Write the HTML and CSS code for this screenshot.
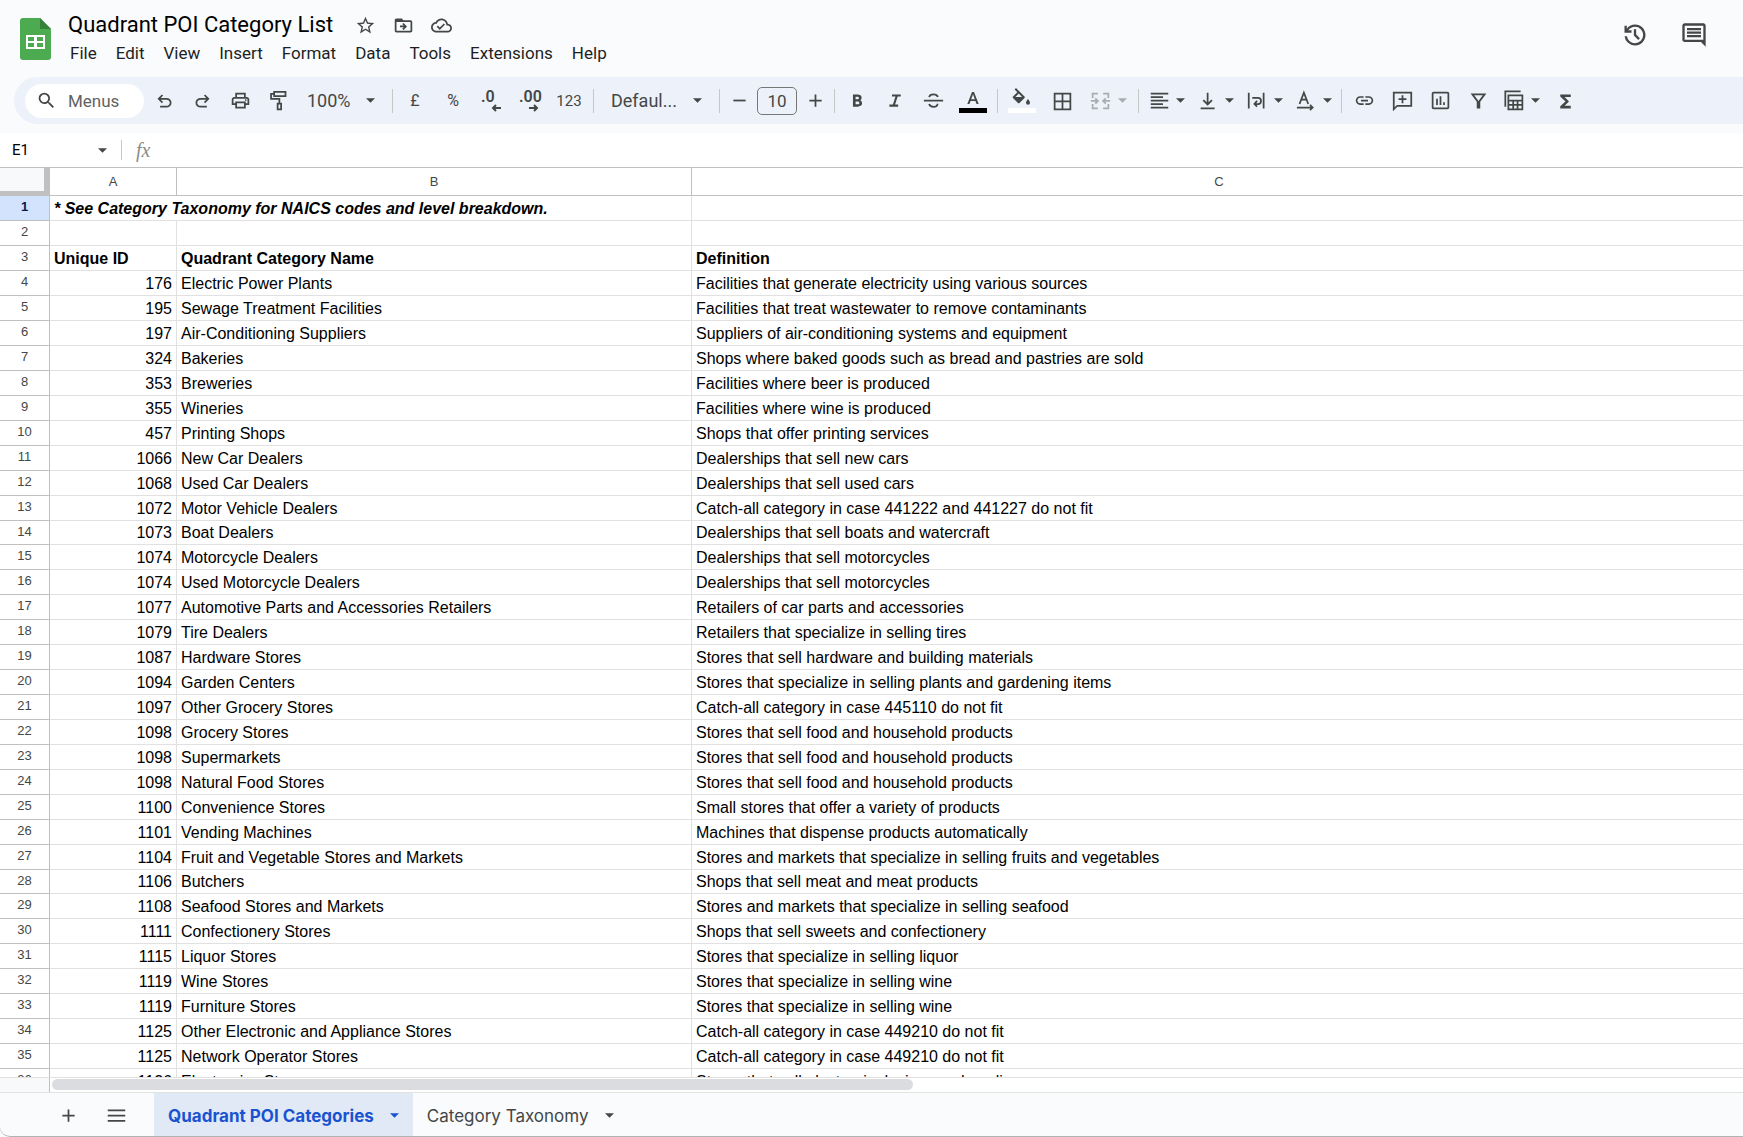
FILE: index.html
```html
<!DOCTYPE html>
<html lang="en">
<head>
    <meta charset="UTF-8">
    <meta name="viewport" content="width=device-width, initial-scale=1.0">
    <title>Quadrant POI Category List</title>
    <link rel="stylesheet" href="styles.css">
</head>
<body>
    <header class="top">
        <svg class="logo" viewBox="0 0 31 42">
            <path d="M3 0h17l11 11v28a3 3 0 0 1-3 3H3a3 3 0 0 1-3-3V3a3 3 0 0 1 3-3z" fill="#4caa50"/>
            <path d="M20 0l11 11H20z" fill="#35803a"/>
            <path d="M6 17h19v14H6z" fill="#fff"/>
            <path d="M8 19h6v4H8zM17 19h6v4h-6zM8 25h6v4H8zM17 25h6v4h-6z" fill="#4caa50"/>
        </svg>
        <div class="doc">
            <div class="title-row">
                <h1>Quadrant POI Category List</h1>
                <button aria-label="Star"><svg class="icon" viewBox="0 0 24 24"><path d="M22 9.24l-7.19-.62L12 2 9.19 8.63 2 9.24l5.46 4.73L5.82 21 12 17.27 18.18 21l-1.63-7.03L22 9.24zM12 15.4l-3.76 2.27 1-4.28-3.32-2.88 4.38-.38L12 6.1l1.71 4.04 4.38.38-3.32 2.88 1 4.28L12 15.4z"/></svg></button>
                <button aria-label="Move"><svg class="icon" viewBox="0 0 24 24"><path d="M20 6h-8l-2-2H4c-1.100 0-2 .9-2 2v12c0 1.100.9 2 2 2h16c1.100 0 2-.9 2-2V8c0-1.100-.9-2-2-2zm0 12H4V8h16v10zm-8-1l4-4-4-4-1.400 1.400 1.600 1.600H8v2h4.200l-1.600 1.600L12 17z"/></svg></button>
                <button aria-label="Saved to Drive"><svg class="icon" viewBox="0 0 24 24"><path d="M19.350 10.040C18.670 6.590 15.640 4 12 4 9.110 4 6.600 5.640 5.350 8.040 2.340 8.360 0 10.910 0 14c0 3.310 2.690 6 6 6h13c2.760 0 5-2.240 5-5 0-2.640-2.050-4.780-4.650-4.960zM19 18H6c-2.210 0-4-1.790-4-4 0-2.050 1.530-3.760 3.560-3.970l1.070-.11.5-.95C8.080 7.140 9.940 6 12 6c2.620 0 4.880 1.860 5.390 4.430l.3 1.500 1.530.11c1.560.1 2.780 1.410 2.780 2.960 0 1.650-1.350 3-3 3zm-9-3.820l-2.090-2.090L6.500 13.500 10 17l6.010-6.010-1.410-1.410z"/></svg></button>
            </div>
            <nav class="menu">
                <button>File</button>
                <button>Edit</button>
                <button>View</button>
                <button>Insert</button>
                <button>Format</button>
                <button>Data</button>
                <button>Tools</button>
                <button>Extensions</button>
                <button>Help</button>
            </nav>
        </div>
        <div class="top-right">
            <button aria-label="Version history"><svg viewBox="0 0 24 24"><path d="M12 21q-3.450 0-6.010-2.290Q3.420 16.430 3.050 13H5.100q.35 2.600 2.310 4.300Q9.380 19 12 19q2.930 0 4.960-2.040Q19 14.930 19 12t-2.040-4.960Q14.930 5 12 5q-1.720 0-3.220.8T6.250 8H9v2H3V4h2v2.350q1.270-1.600 3.110-2.470Q9.950 3 12 3q1.880 0 3.510.71 1.640.71 2.850 1.930 1.210 1.210 1.930 2.850Q21 10.130 21 12t-.71 3.510q-.72 1.640-1.930 2.850-1.210 1.210-2.850 1.930Q13.880 21 12 21zm2.800-4.800L11 12.400V7h2v4.600l3.200 3.200z"/></svg></button>
            <button aria-label="Comments"><svg viewBox="0 0 24 24"><path d="M6 14h12v-2H6zm0-3h12V9H6zm0-3h12V6H6zm16 14l-4-4H4q-.82 0-1.410-.59Q2 16.830 2 16V4q0-.82.590-1.410Q3.180 2 4 2h16q.83 0 1.410.59Q22 3.180 22 4zM4 4v12h16V4z"/></svg></button>
        </div>
    </header>

    <div class="toolbar">
        <label class="menus">
            <svg class="icon" viewBox="0 0 24 24"><path d="M15.500 14h-.79l-.28-.27A6.470 6.470 0 0 0 16 9.500 6.500 6.500 0 1 0 9.500 16c1.610 0 3.090-.59 4.230-1.570l.27.28v.79l5 4.990L20.490 19l-4.990-5zm-6 0C7.010 14 5 11.990 5 9.500S7.010 5 9.500 5 14 7.010 14 9.500 11.990 14 9.500 14z"/></svg>
            <input type="text" placeholder="Menus" aria-label="Menus">
        </label>
        <button class="tool" aria-label="Undo"><svg class="icon" viewBox="0 0 24 24"><path d="M7 20v-2h7.100q1.570 0 2.740-1Q18 16 18 14.500T16.840 12q-1.170-1-2.740-1H7.800l2.600 2.600L9 15l-5-5 5-5 1.400 1.400L7.800 9h6.300q2.430 0 4.160 1.570Q20 12.150 20 14.500t-1.740 3.930Q16.530 20 14.100 20z"/></svg></button>
        <button class="tool" aria-label="Redo"><svg class="icon" viewBox="0 0 24 24"><path d="M17 20v-2H9.900q-1.570 0-2.740-1Q6 16 6 14.500T7.160 12q1.170-1 2.740-1h6.300l-2.600 2.600L15 15l5-5-5-5-1.400 1.400L16.200 9H9.900q-2.430 0-4.160 1.570Q4 12.150 4 14.500t1.740 3.930Q7.470 20 9.900 20z"/></svg></button>
        <button class="tool" aria-label="Print"><svg class="icon" viewBox="0 0 24 24"><path d="M19 8h-1V3H6v5H5c-1.660 0-3 1.340-3 3v6h4v4h12v-4h4v-6c0-1.660-1.340-3-3-3zM8 5h8v3H8V5zm8 14H8v-4h8v4zm4-4h-2v-2H6v2H4v-4c0-.55.45-1 1-1h14c.55 0 1 .45 1 1v4z"/><circle cx="18" cy="11.500" r="1"/></svg></button>
        <button class="tool" aria-label="Paint format"><svg class="icon line" viewBox="0 0 24 24"><path d="M7 2h13v5H7zM7 4.500H3.500V10H13v5M11 15.500h4V22h-4z"/></svg></button>
        <div class="select zoom">
            <select aria-label="Zoom"><option>100%</option></select>
            <svg class="caret" viewBox="0 0 10 5"><path d="M0 0h10L5 5z"/></svg>
        </div>
        <span class="sep"></span>
        <button class="tool">£</button>
        <button class="tool">%</button>
        <button class="tool decimal" aria-label="Decrease decimal places"><b>.0</b><svg viewBox="0 0 10 8"><path d="M10 4H2M5 1L2 4l3 3"/></svg></button>
        <button class="tool decimal" aria-label="Increase decimal places"><b>.00</b><svg viewBox="0 0 10 8"><path d="M0 4h8M5 1l3 3-3 3"/></svg></button>
        <button class="tool number">123</button>
        <span class="sep"></span>
        <div class="select font">
            <select aria-label="Font"><option>Defaul...</option></select>
            <svg class="caret" viewBox="0 0 10 5"><path d="M0 0h10L5 5z"/></svg>
        </div>
        <span class="sep"></span>
        <button class="tool step" aria-label="Decrease font size"><svg class="icon line" viewBox="0 0 24 24"><path d="M5 12h14"/></svg></button>
        <input class="font-size" type="text" value="10" aria-label="Font size">
        <button class="tool step" aria-label="Increase font size"><svg class="icon line" viewBox="0 0 24 24"><path d="M5 12h14M12 5v14"/></svg></button>
        <span class="sep"></span>
        <button class="tool" aria-label="Bold"><svg class="icon" viewBox="0 0 24 24"><path d="M6.800 19V5h5.530q1.620 0 3 1t1.370 2.780q0 1.270-.58 1.960-.57.69-1.070.98.620.28 1.380 1.030T17.200 15q0 2.230-1.630 3.110Q13.950 19 12.520 19zm3.030-2.800h2.600q1.200 0 1.460-.61.270-.62.270-.9t-.27-.89q-.26-.62-1.540-.62H9.830zm0-5.700h2.330q.82 0 1.200-.43.370-.42.370-.95 0-.6-.43-.97-.42-.38-1.100-.38H9.830z"/></svg></button>
        <button class="tool" aria-label="Italic"><svg class="icon" viewBox="0 0 24 24"><path d="M5 19v-2.500h4l3-9H8V5h10v2.500h-3.500l-3 9H15V19z"/></svg></button>
        <button class="tool" aria-label="Strikethrough"><svg class="icon line" viewBox="0 0 24 24"><path d="M1 12h22M17 8c-.7-2-2.600-3-5-3S7.500 6 7 8.200M7 16c.5 2 2.500 3.200 5 3.200s4.600-1 4.600-3.500"/></svg></button>
        <button class="tool colour" aria-label="Text colour"><svg viewBox="0 0 28 28"><path d="M8.300 17L13 5h2l4.700 12h-2.100l-1.200-3.100h-4.800L10.400 17zM12.200 12.200h3.600L14 7.300z"/><path d="M0 21h28v5H0z" fill="#000"/></svg></button>
        <span class="sep"></span>
        <button class="tool colour" aria-label="Fill colour"><svg viewBox="0 0 28 28"><path d="M8 1l8.500 8.500a1 1 0 0 1 0 1.400l-4.800 4.800a1.400 1.400 0 0 1-2 0L5 10.900a1 1 0 0 1 0-1.400l4.300-4.300-2.700-2.700zM10.700 6.600L7.400 10h6.700zM20 12s2 2.500 2 3.700a2 2 0 0 1-4 0c0-1.200 2-3.700 2-3.700z"/><path d="M0 21h28v5H0z" fill="#fff"/></svg></button>
        <button class="tool" aria-label="Borders"><svg class="icon line" viewBox="0 0 24 24"><path d="M3 4h18v18H3zM12 4v18M3 13h18"/></svg></button>
        <button class="tool merge" aria-label="Merge cells" disabled><svg class="icon line" viewBox="0 0 24 24"><path d="M9 4H3v5M3 16v5h6M15 4h6v5M21 16v5h-6M1 12.500h8M6 9.500l3 3-3 3M23 12.500h-8M18 9.500l-3 3 3 3"/></svg><svg class="caret" viewBox="0 0 10 5"><path d="M0 0h10L5 5z"/></svg></button>
        <span class="sep"></span>
        <button class="tool wide" aria-label="Horizontal align"><svg class="icon line" viewBox="0 0 24 24"><path d="M2 4h20M2 8h14M2 12h20M2 16h14M2 20h20"/></svg><svg class="caret" viewBox="0 0 10 5"><path d="M0 0h10L5 5z"/></svg></button>
        <button class="tool wide" aria-label="Vertical align"><svg class="icon line" viewBox="0 0 24 24"><path d="M3 21h16M11 3v13M6 11.500l5 5 5-5"/></svg><svg class="caret" viewBox="0 0 10 5"><path d="M0 0h10L5 5z"/></svg></button>
        <button class="tool wide" aria-label="Text wrapping"><svg class="icon line" viewBox="0 0 24 24"><path d="M2 3v18M19 3v18M6 9h6.500a3.500 3.500 0 0 1 0 7H9M11.500 12.500L8.500 16l3 3"/></svg><svg class="caret" viewBox="0 0 10 5"><path d="M0 0h10L5 5z"/></svg></button>
        <button class="tool wide" aria-label="Text rotation"><svg class="icon line" viewBox="0 0 24 24"><path d="M4 16L9 3l5 13M6 11h6M1 20h18M16 17l3 3-3 3"/></svg><svg class="caret" viewBox="0 0 10 5"><path d="M0 0h10L5 5z"/></svg></button>
        <span class="sep"></span>
        <button class="tool" aria-label="Insert link"><svg class="icon" viewBox="0 0 24 24"><path d="M3.900 12c0-1.710 1.390-3.100 3.100-3.100h4V7H7c-2.760 0-5 2.240-5 5s2.240 5 5 5h4v-1.900H7c-1.710 0-3.100-1.390-3.100-3.100zM8 13h8v-2H8v2zm9-6h-4v1.900h4c1.710 0 3.100 1.390 3.100 3.100s-1.390 3.100-3.100 3.100h-4V17h4c2.760 0 5-2.240 5-5s-2.240-5-5-5z"/></svg></button>
        <button class="tool" aria-label="Insert comment"><svg class="icon line" viewBox="0 0 24 24"><path d="M2 22V3h20v15H6zM12 6v9M7.500 10.500h9"/></svg></button>
        <button class="tool" aria-label="Insert chart"><svg class="icon line" viewBox="0 0 24 24"><rect x="3" y="3" width="18" height="18" rx="1"/><path d="M8 10v7M12 7v10M16 14v3"/></svg></button>
        <button class="tool" aria-label="Filter"><svg class="icon line" viewBox="0 0 24 24"><path d="M5 5h14l-6 8v7h-2v-7z"/></svg></button>
        <button class="tool wide" aria-label="Table views"><svg class="icon line" viewBox="0 0 24 24"><path d="M19 1.500H1.500V19M5 6h16v16H5zM5 12h16M5 17h16M10.500 12v10M15.500 12v10"/></svg><svg class="caret" viewBox="0 0 10 5"><path d="M0 0h10L5 5z"/></svg></button>
        <button class="tool" aria-label="Functions"><svg class="icon" viewBox="0 0 24 24"><path d="M6 21v-2.500l6-5.500-6-5.500V5h12v3h-7l5 5-5 5h7v3z"/></svg></button>
    </div>

    <div class="formula-bar">
        <input class="name-box" type="text" value="E1" aria-label="Name box">
        <svg class="caret" viewBox="0 0 10 5"><path d="M0 0h10L5 5z"/></svg>
        <span class="sep"></span>
        <label for="formula" class="fx">fx</label>
        <input id="formula" class="formula" type="text">
    </div>

    <main class="grid">
        <table>
            <colgroup>
                <col class="col-num">
                <col class="col-a">
                <col class="col-b">
                <col>
            </colgroup>
            <thead>
                <tr><th class="corner"></th><th>A</th><th>B</th><th>C</th></tr>
            </thead>
            <tbody>
                <tr class="note"><th class="selected">1</th><td colspan="2">* See Category Taxonomy for NAICS codes and level breakdown.</td><td></td></tr>
                <tr><th>2</th><td></td><td></td><td></td></tr>
                <tr class="heading"><th>3</th><td>Unique ID</td><td>Quadrant Category Name</td><td>Definition</td></tr>
                <tr><th>4</th><td class="id">176</td><td>Electric Power Plants</td><td>Facilities that generate electricity using various sources</td></tr>
                <tr><th>5</th><td class="id">195</td><td>Sewage Treatment Facilities</td><td>Facilities that treat wastewater to remove contaminants</td></tr>
                <tr><th>6</th><td class="id">197</td><td>Air-Conditioning Suppliers</td><td>Suppliers of air-conditioning systems and equipment</td></tr>
                <tr><th>7</th><td class="id">324</td><td>Bakeries</td><td>Shops where baked goods such as bread and pastries are sold</td></tr>
                <tr><th>8</th><td class="id">353</td><td>Breweries</td><td>Facilities where beer is produced</td></tr>
                <tr><th>9</th><td class="id">355</td><td>Wineries</td><td>Facilities where wine is produced</td></tr>
                <tr><th>10</th><td class="id">457</td><td>Printing Shops</td><td>Shops that offer printing services</td></tr>
                <tr><th>11</th><td class="id">1066</td><td>New Car Dealers</td><td>Dealerships that sell new cars</td></tr>
                <tr><th>12</th><td class="id">1068</td><td>Used Car Dealers</td><td>Dealerships that sell used cars</td></tr>
                <tr><th>13</th><td class="id">1072</td><td>Motor Vehicle Dealers</td><td>Catch-all category in case 441222 and 441227 do not fit</td></tr>
                <tr><th>14</th><td class="id">1073</td><td>Boat Dealers</td><td>Dealerships that sell boats and watercraft</td></tr>
                <tr><th>15</th><td class="id">1074</td><td>Motorcycle Dealers</td><td>Dealerships that sell motorcycles</td></tr>
                <tr><th>16</th><td class="id">1074</td><td>Used Motorcycle Dealers</td><td>Dealerships that sell motorcycles</td></tr>
                <tr><th>17</th><td class="id">1077</td><td>Automotive Parts and Accessories Retailers</td><td>Retailers of car parts and accessories</td></tr>
                <tr><th>18</th><td class="id">1079</td><td>Tire Dealers</td><td>Retailers that specialize in selling tires</td></tr>
                <tr><th>19</th><td class="id">1087</td><td>Hardware Stores</td><td>Stores that sell hardware and building materials</td></tr>
                <tr><th>20</th><td class="id">1094</td><td>Garden Centers</td><td>Stores that specialize in selling plants and gardening items</td></tr>
                <tr><th>21</th><td class="id">1097</td><td>Other Grocery Stores</td><td>Catch-all category in case 445110 do not fit</td></tr>
                <tr><th>22</th><td class="id">1098</td><td>Grocery Stores</td><td>Stores that sell food and household products</td></tr>
                <tr><th>23</th><td class="id">1098</td><td>Supermarkets</td><td>Stores that sell food and household products</td></tr>
                <tr><th>24</th><td class="id">1098</td><td>Natural Food Stores</td><td>Stores that sell food and household products</td></tr>
                <tr><th>25</th><td class="id">1100</td><td>Convenience Stores</td><td>Small stores that offer a variety of products</td></tr>
                <tr><th>26</th><td class="id">1101</td><td>Vending Machines</td><td>Machines that dispense products automatically</td></tr>
                <tr><th>27</th><td class="id">1104</td><td>Fruit and Vegetable Stores and Markets</td><td>Stores and markets that specialize in selling fruits and vegetables</td></tr>
                <tr><th>28</th><td class="id">1106</td><td>Butchers</td><td>Shops that sell meat and meat products</td></tr>
                <tr><th>29</th><td class="id">1108</td><td>Seafood Stores and Markets</td><td>Stores and markets that specialize in selling seafood</td></tr>
                <tr><th>30</th><td class="id">1111</td><td>Confectionery Stores</td><td>Shops that sell sweets and confectionery</td></tr>
                <tr><th>31</th><td class="id">1115</td><td>Liquor Stores</td><td>Stores that specialize in selling liquor</td></tr>
                <tr><th>32</th><td class="id">1119</td><td>Wine Stores</td><td>Stores that specialize in selling wine</td></tr>
                <tr><th>33</th><td class="id">1119</td><td>Furniture Stores</td><td>Stores that specialize in selling wine</td></tr>
                <tr><th>34</th><td class="id">1125</td><td>Other Electronic and Appliance Stores</td><td>Catch-all category in case 449210 do not fit</td></tr>
                <tr><th>35</th><td class="id">1125</td><td>Network Operator Stores</td><td>Catch-all category in case 449210 do not fit</td></tr>
                <tr><th>36</th><td class="id">1126</td><td>Electronics Stores</td><td>Stores that sell electronic devices and appliances</td></tr>
            </tbody>
        </table>
    </main>

    <div class="scroll">
        <div class="scroll-corner"></div>
        <div class="track"><div class="thumb"></div></div>
    </div>

    <footer class="sheets">
        <button class="sheet-tool" aria-label="Add sheet"><svg class="icon line" viewBox="0 0 24 24"><path d="M5 12h14M12 5v14"/></svg></button>
        <button class="sheet-tool" aria-label="All sheets"><svg class="icon line" viewBox="0 0 24 24"><path d="M2 6h20M2 12h20M2 18h20"/></svg></button>
        <button class="tab active">Quadrant POI Categories <svg class="caret" viewBox="0 0 10 5"><path d="M0 0h10L5 5z"/></svg></button>
        <button class="tab">Category Taxonomy <svg class="caret" viewBox="0 0 10 5"><path d="M0 0h10L5 5z"/></svg></button>
    </footer>
</body>
</html>
```
FILE: styles.css
```css
* {
    box-sizing: border-box;
}

body {
    margin: 0;
    height: 100vh;
    display: flex;
    flex-direction: column;
    overflow: hidden;
    font-family: Roboto, "Liberation Sans", sans-serif;
    color: #1f1f1f;
    background-color: #f9fbfd;
}

button {
    padding: 0;
    border: none;
    background: none;
    font-family: inherit;
    color: inherit;
    cursor: pointer;
}

input,
select {
    padding: 0;
    border: none;
    outline: none;
    background: none;
    font-family: inherit;
    color: inherit;
}

svg {
    display: block;
    flex-shrink: 0;
    fill: #444746;
}

.icon {
    width: 21px;
    height: 21px;
}

.line {
    fill: none;
    stroke: #444746;
    stroke-width: 2;
}

.caret {
    width: 9px;
    height: 5px;
}

.sep {
    width: 1px;
    height: 24px;
    flex-shrink: 0;
    background-color: #c7c7c7;
}

/* Title and menus */
.top {
    display: flex;
    align-items: flex-start;
    height: 77px;
    padding: 0 35px 0 20px;
}

.logo {
    width: 31px;
    height: 42px;
    margin-top: 18px;
}

.doc {
    margin: 9px 0 0 17px;
}

.title-row {
    display: flex;
    align-items: center;
    gap: 17px;
    height: 32px;
}

.title-row h1 {
    margin: 0 5px 0 0;
    font-size: 22px;
    font-weight: 400;
    line-height: 32px;
    color: #000;
}

.menu {
    display: flex;
    gap: 19px;
    padding-left: 2px;
}

.menu button {
    font-size: 17px;
    line-height: 24px;
}

.top-right {
    display: flex;
    gap: 31px;
    margin: 21px 0 0 auto;
}

.top-right svg {
    width: 28px;
    height: 28px;
}

/* Toolbar */
.toolbar {
    display: flex;
    align-items: center;
    flex-shrink: 0;
    height: 47px;
    margin: 0 0 9px 14px;
    padding-left: 11px;
    border-radius: 24px 0 0 24px;
    background-color: #edf2fa;
    color: #444746;
}

.menus {
    display: flex;
    align-items: center;
    gap: 11px;
    width: 119px;
    height: 34px;
    margin-right: 1px;
    padding-left: 11px;
    border-radius: 17px;
    background-color: #fff;
}

.menus input {
    width: 70px;
    font-size: 17px;
}

.menus input::placeholder {
    color: #5f6361;
    opacity: 1;
}

.tool {
    display: flex;
    align-items: center;
    justify-content: center;
    flex-shrink: 0;
    width: 38px;
    height: 34px;
    font-size: 16px;
}

.tool.number {
    width: 42px;
    font-size: 15px;
}

.tool.step {
    width: 32px;
}

.tool.wide {
    width: 49px;
    gap: 6px;
}

.tool.merge {
    width: 54px;
    gap: 7px;
}

.tool.merge svg {
    opacity: 0.4;
}

.tool.decimal {
    flex-direction: column;
    align-items: flex-start;
    padding-left: 9px;
}

.decimal b {
    font-size: 16px;
    font-weight: 600;
    line-height: 14px;
}

.decimal svg {
    width: 10px;
    height: 8px;
    margin-left: 10px;
    fill: none;
    stroke: #444746;
    stroke-width: 2;
}

.tool.colour {
    width: 42px;
}

.colour svg {
    width: 28px;
    height: 28px;
}

.select {
    display: flex;
    align-items: center;
    position: relative;
}

.select select {
    width: 100%;
    appearance: none;
    font-size: 18px;
}

.select .caret {
    position: absolute;
    right: 14px;
    pointer-events: none;
}

.zoom {
    width: 92px;
    padding-left: 10px;
}

.font {
    width: 119px;
    padding-left: 14px;
}

.font-size {
    width: 40px;
    height: 28px;
    margin: 0 2px;
    border: 1px solid #747775;
    border-radius: 5px;
    font-size: 17px;
    text-align: center;
}

.toolbar > .sep {
    margin: 0 3px;
}

/* Formula bar */
.formula-bar {
    display: flex;
    align-items: center;
    flex-shrink: 0;
    height: 34px;
    background-color: #fff;
}

.name-box {
    width: 98px;
    padding-left: 12px;
    font-size: 15px;
    color: #000;
}

.formula-bar .sep {
    height: 20px;
    margin: 0 14px;
}

.fx {
    font-family: "Liberation Serif", serif;
    font-size: 20px;
    font-style: italic;
    color: #8a8d8c;
}

.formula {
    flex: 1;
    margin-left: 12px;
    font-size: 16px;
}

/* Sheet */
.grid {
    flex: 1;
    min-height: 0;
    overflow: hidden;
    border-top: 1px solid #c0c0c0;
    background-color: #fff;
}

/* last column runs past the right edge */
.grid table {
    width: calc(100% + 4px);
    table-layout: fixed;
    border-collapse: separate;
    border-spacing: 0;
    font-family: "Liberation Sans", Arial, sans-serif;
    color: #000;
}

.col-num {
    width: 50px;
}

.col-a {
    width: 127px;
}

.col-b {
    width: 515px;
}

.grid th {
    padding: 0;
    border-right: 1px solid #c0c0c0;
    border-bottom: 1px solid #c0c0c0;
    font-size: 13px;
    font-weight: 400;
    color: #444746;
}

.grid thead th {
    height: 28px;
}

.grid tbody th {
    line-height: 22px;
    vertical-align: top;
}

.grid .corner {
    border-right: 6px solid #c0c0c0;
    border-bottom: 5px solid #c0c0c0;
    background-color: #f8f9fa;
}

.grid .selected {
    background-color: #d3e3fd;
    font-weight: 700;
    color: #041e49;
}

.grid td {
    height: 25px;
    padding: 0 4px;
    border-right: 1px solid #e1e1e1;
    border-bottom: 1px solid #e1e1e1;
    font-size: 16px;
    line-height: 22px;
    vertical-align: bottom;
    white-space: nowrap;
}

/* rows average a little under 25px */
.grid tr:nth-child(14n) td {
    height: 24px;
}

.grid .id {
    text-align: right;
}

.note td {
    font-weight: 700;
    font-style: italic;
}

.heading td {
    font-weight: 700;
}

/* Scrollbar */
.scroll {
    display: flex;
    flex-shrink: 0;
    height: 16px;
    border-top: 1px solid #e1e1e1;
    border-bottom: 1px solid #e1e3e1;
    background-color: #fff;
}

.scroll-corner {
    width: 50px;
    border-right: 1px solid #c0c0c0;
    background-color: #f8f9fa;
}

.track {
    flex: 1;
    padding: 1px 2px;
}

.thumb {
    width: 51%;
    height: 11px;
    border-radius: 6px;
    background-color: #dadce0;
}

/* Sheet tabs */
.sheets {
    display: flex;
    flex-shrink: 0;
    height: 44px;
    padding-left: 44px;
    border-bottom: 1px solid #b0b2b4;
    border-bottom-left-radius: 10px;
}

.sheet-tool {
    display: flex;
    align-items: center;
    justify-content: center;
    width: 48px;
    padding-top: 2px;
}

.tab {
    display: flex;
    align-items: center;
    gap: 16px;
    padding: 2px 14px 0;
    font-family: Inter, Roboto, sans-serif;
    font-size: 17px;
    color: #444746;
}

.tab.active {
    margin-left: 14px;
    background-color: #e1e9f7;
    font-weight: 700;
    color: #1a53cf;
}

.tab.active .caret {
    fill: #1a53cf;
}
```
